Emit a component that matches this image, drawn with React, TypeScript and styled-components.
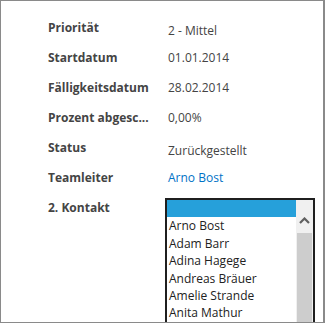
import React from "react";
import styled, { createGlobalStyle } from "styled-components";

const GlobalStyle = createGlobalStyle`
  html, body { margin: 0; padding: 0; background: #ffffff; }
  body { font-family: "Open Sans", "Liberation Sans", sans-serif; }
`;

const Frame = styled.div`
  box-sizing: border-box;
  width: 325px;
  height: 323px;
  border: 1px solid #8a8a8a;
  border-right-width: 2px;
  background: #ffffff;
  overflow: hidden;
  padding: 18px 0 0 47px;
`;

const Form = styled.div`
  display: grid;
  grid-template-columns: 117px 150px;
  grid-auto-rows: 30px;
  font-size: 12px;
  line-height: 17px;
`;

const Label = styled.div`
  font-weight: 700;
  color: #444444;
  white-space: nowrap;
`;

const Value = styled.div<{ $shift?: boolean; $link?: boolean }>`
  padding: ${(p) => (p.$shift ? "3px" : "0")} 0 0 3px;
  color: ${(p) => (p.$link ? "#0072c6" : "#444444")};
  white-space: nowrap;
`;

const ListBox = styled.div`
  display: flex;
  margin-top: -1px;
  height: 140px;
  border: 2px solid #1f1f1f;
  background: #ffffff;
`;

const Options = styled.div`
  width: 129px;
  display: flex;
  flex-direction: column;
`;

const Option = styled.div<{ $selected?: boolean }>`
  height: 17.4px;
  line-height: 17.4px;
  padding-left: 2px;
  font-size: 12px;
  color: #222222;
  background: ${(p) => (p.$selected ? "#26a0da" : "transparent")};
  white-space: nowrap;
`;

const ScrollBar = styled.div`
  width: 17px;
  background: #f0f0f0;
  display: flex;
  flex-direction: column;
  align-items: center;
`;

const ArrowButton = styled.div`
  height: 33px;
  width: 17px;
  display: flex;
  align-items: flex-start;
  justify-content: center;
  padding-top: 17px;
  box-sizing: border-box;
`;

const Thumb = styled.div`
  width: 15px;
  flex: 1;
  background: #cdcdcd;
`;

const rows: { label: string; value: string; shift?: boolean; link?: boolean }[] = [
  { label: "Priorität", value: "2 - Mittel", shift: true },
  { label: "Startdatum", value: "01.01.2014" },
  { label: "Fälligkeitsdatum", value: "28.02.2014" },
  { label: "Prozent abgesc...", value: "0,00%" },
  { label: "Status", value: "Zurückgestellt", shift: true },
  { label: "Teamleiter", value: "Arno Bost", link: true },
];

const contacts = ["", "Arno Bost", "Adam Barr", "Adina Hagege", "Andreas Bräuer", "Amelie Strande", "Anita Mathur"];

export default function App() {
  return (
    <>
      <GlobalStyle />
      <Frame>
        <Form>
          {rows.map((r) => (
            <React.Fragment key={r.label}>
              <Label>{r.label}</Label>
              <Value $shift={r.shift} $link={r.link}>{r.value}</Value>
            </React.Fragment>
          ))}
          <Label>2. Kontakt</Label>
          <ListBox>
            <Options>
              {contacts.map((c, i) => (
                <Option key={i} $selected={i === 0}>{c || "\u00a0"}</Option>
              ))}
            </Options>
            <ScrollBar>
              <ArrowButton>
                <svg width="11" height="7" viewBox="0 0 11 7">
                  <path d="M1 6 L5.5 1.5 L10 6" fill="none" stroke="#606060" strokeWidth="2.2" />
                </svg>
              </ArrowButton>
              <Thumb />
            </ScrollBar>
          </ListBox>
        </Form>
      </Frame>
    </>
  );
}
